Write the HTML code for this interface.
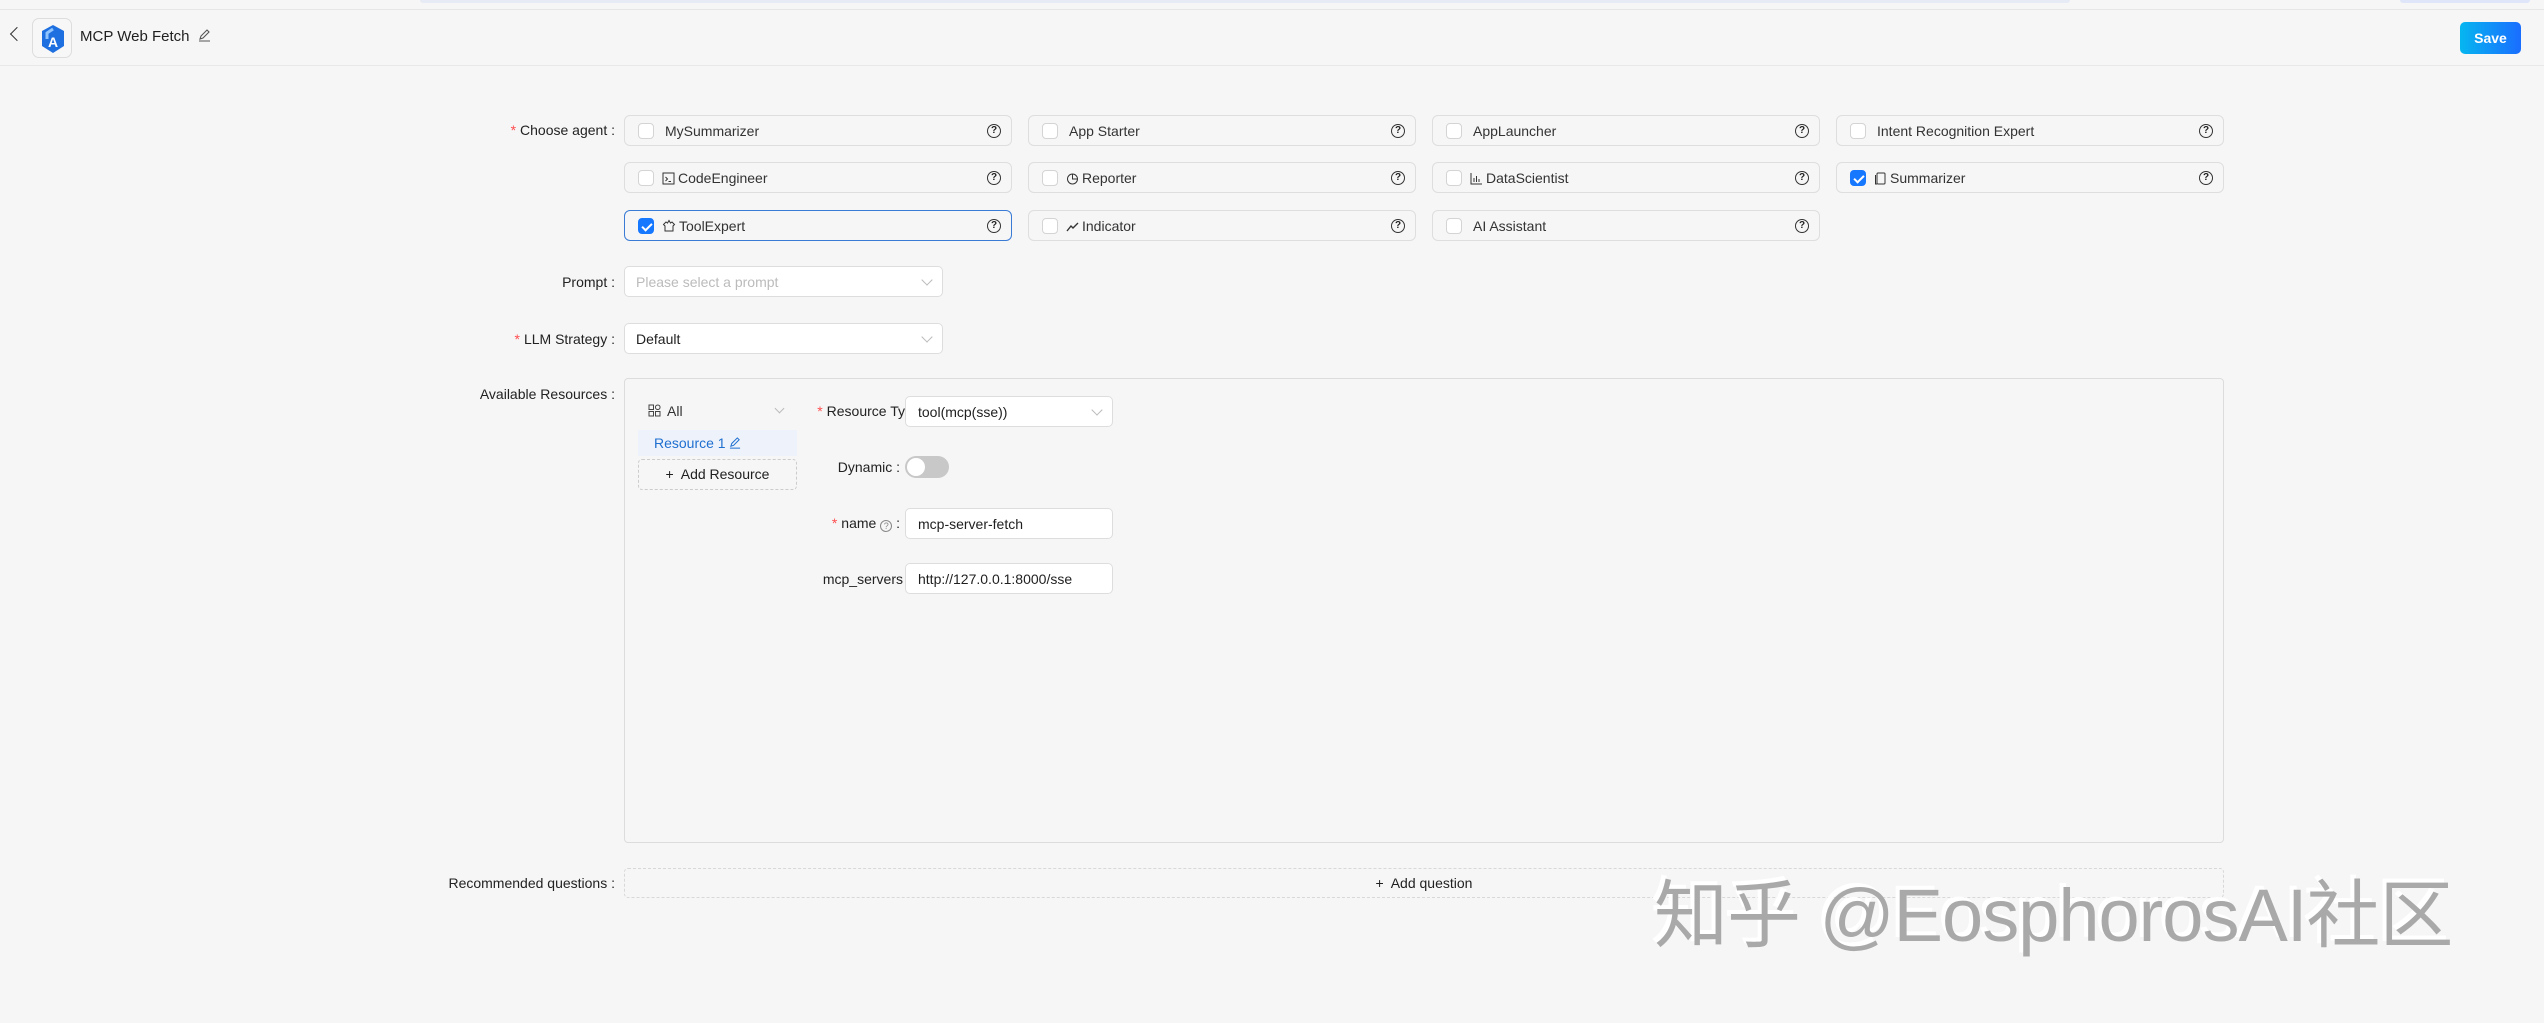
<!DOCTYPE html>
<html><head><meta charset="utf-8"><style>
*{box-sizing:border-box;margin:0;padding:0}
body{width:2544px;height:1023px;background:#f6f6f6;font-family:"Liberation Sans","Noto Sans CJK SC",sans-serif;color:#1f1f1f;position:relative;overflow:hidden;font-size:14px}
.a{position:absolute}
.topstrip{left:420px;top:0;width:1650px;height:3px;background:#e6ebf5;border-radius:0 0 6px 6px}
.topstrip2{left:2400px;top:0;width:130px;height:3px;background:#dfe6fa;border-radius:0 0 6px 6px}
.hdr{left:0;top:9px;width:2544px;height:57px;border-top:1px solid #e6e6e6;border-bottom:1px solid #e8e8e8}
.logo{left:32px;top:18px;width:40px;height:40px;border:1px solid #ddd;border-radius:7px;background:#f7f7f7}
.title{left:80px;top:28px;font-size:15px}
.save{left:2460px;top:22px;width:61px;height:32px;border-radius:5px;background:linear-gradient(90deg,#06b6f0,#1a6dff);color:#fff;font-weight:bold;font-size:14px;text-align:center;line-height:32px}
.lbl{text-align:right;font-size:14px;color:#222}
.req{color:#ff4d4f;margin-right:4px}
.cb{height:31px;width:388px;border:1px solid #dedede;border-radius:6px;background:#f6f6f6}
.cb.sel{border-color:#3a7bd5}
.box{position:absolute;left:13px;top:7px;width:16px;height:16px;border:1px solid #d4d4d4;border-radius:4px;background:#fff}
.box.on{background:#1677ff;border-color:#1677ff}
.box.on:after{content:"";position:absolute;left:5px;top:2px;width:4px;height:8px;border:solid #fff;border-width:0 2px 2px 0;transform:rotate(45deg)}
.t{position:absolute;left:40px;top:7px;font-size:14px;color:#333;white-space:nowrap}
.t.i{left:37px}
.t svg{vertical-align:-2px;margin-right:3px}
.q{position:absolute;right:10px;top:8px;width:14px;height:14px;border:1.3px solid #333;border-radius:50%;font-size:10px;line-height:12px;text-align:center;font-weight:bold}
.sel2{width:319px;height:31px;border:1px solid #ddd;border-radius:5px;background:#fff;padding:7px 11px;font-size:14px}
.chev{position:absolute;right:11px;top:9px;width:8px;height:8px;border:solid #bbb;border-width:0 1px 1px 0;transform:rotate(45deg)}
.inp{width:208px;height:31px;border:1px solid #ddd;border-radius:5px;background:#fff;padding:7px 12px;font-size:14px}
</style></head><body>
<div class="a topstrip"></div><div class="a topstrip2"></div>
<div class="a hdr"></div>
<div class="a" style="left:12px;top:29px;width:10px;height:10px;border:solid #333;border-width:0 0 1.5px 1.5px;transform:rotate(45deg)"></div>
<div class="a logo"><svg width="40" height="40" viewBox="0 0 40 40"><path d="M20 6 L31 12 L31 27 L20 34 L9 27 L9 12 Z" fill="#1e6fe0"/><path d="M20 10 L14 14 L14 20" stroke="#8fc4ff" stroke-width="3" fill="none"/><text x="20" y="28" font-size="14" font-weight="bold" fill="#fff" text-anchor="middle" font-family="Liberation Sans">A</text></svg></div>
<div class="a title">MCP Web Fetch <svg width="13" height="13" viewBox="0 0 13 13" style="vertical-align:-1px;margin-left:4px"><path d="M2 10 L3 7 L9 1 L11 3 L5 9 Z M1 12 H12" stroke="#555" fill="none" stroke-width="1.1"/></svg></div>
<div class="a save">Save</div>

<div class="a lbl" style="left:400px;width:215px;top:122px"><span class="req">*</span>Choose agent :</div>

<div class="a cb" style="left:624px;top:115px"><div class="box"></div><div class="t">MySummarizer</div><div class="q">?</div></div>
<div class="a cb" style="left:1028px;top:115px"><div class="box"></div><div class="t">App Starter</div><div class="q">?</div></div>
<div class="a cb" style="left:1432px;top:115px"><div class="box"></div><div class="t">AppLauncher</div><div class="q">?</div></div>
<div class="a cb" style="left:1836px;top:115px"><div class="box"></div><div class="t">Intent Recognition Expert</div><div class="q">?</div></div>

<div class="a cb" style="left:624px;top:162px"><div class="box"></div><div class="t i"><svg width="13" height="13" viewBox="0 0 13 13"><rect x="1" y="1" width="11" height="11" fill="none" stroke="#333"/><path d="M3.5 5 L5.5 7 L3.5 9 M6.5 9.5 H9" stroke="#333" fill="none"/></svg>CodeEngineer</div><div class="q">?</div></div>
<div class="a cb" style="left:1028px;top:162px"><div class="box"></div><div class="t i"><svg width="13" height="13" viewBox="0 0 13 13"><circle cx="6.5" cy="7" r="5" fill="none" stroke="#333"/><path d="M6.5 2 V7 H11.5" stroke="#333" fill="none"/></svg>Reporter</div><div class="q">?</div></div>
<div class="a cb" style="left:1432px;top:162px"><div class="box"></div><div class="t i"><svg width="13" height="13" viewBox="0 0 13 13"><path d="M1 1 V12 H12 M4 10 V6 M6.5 10 V4 M9 10 V7" stroke="#333" fill="none"/></svg>DataScientist</div><div class="q">?</div></div>
<div class="a cb" style="left:1836px;top:162px"><div class="box on"></div><div class="t i"><svg width="13" height="13" viewBox="0 0 13 13"><rect x="3" y="1" width="8" height="11" rx="1" fill="none" stroke="#333"/><path d="M1.5 3 V12 H3" stroke="#333" fill="none"/></svg>Summarizer</div><div class="q">?</div></div>

<div class="a cb sel" style="left:624px;top:210px"><div class="box on"></div><div class="t i"><svg width="14" height="14" viewBox="0 0 14 14"><path d="M3 12 V7 L1.5 5.5 L4 3 L5.5 4 L7 1.5 L8.5 4 L10 3 L12.5 5.5 L11 7 V12 Z" fill="none" stroke="#333"/></svg>ToolExpert</div><div class="q">?</div></div>
<div class="a cb" style="left:1028px;top:210px"><div class="box"></div><div class="t i"><svg width="13" height="13" viewBox="0 0 13 13"><path d="M1 11 L5 6 L7 8 L12 3" stroke="#333" stroke-width="1.4" fill="none"/></svg>Indicator</div><div class="q">?</div></div>
<div class="a cb" style="left:1432px;top:210px"><div class="box"></div><div class="t">AI Assistant</div><div class="q">?</div></div>

<div class="a lbl" style="left:400px;width:215px;top:274px">Prompt :</div>
<div class="a sel2" style="left:624px;top:266px;color:#bbb">Please select a prompt<div class="chev"></div></div>
<div class="a lbl" style="left:400px;width:215px;top:331px"><span class="req">*</span>LLM Strategy :</div>
<div class="a sel2" style="left:624px;top:323px">Default<div class="chev"></div></div>

<div class="a lbl" style="left:400px;width:215px;top:386px">Available Resources :</div>
<div class="a" style="left:624px;top:378px;width:1600px;height:465px;border:1px solid #dcdcdc;border-radius:4px"></div>
<div class="a" style="left:648px;top:403px;font-size:14px;color:#333"><svg width="13" height="13" viewBox="0 0 13 13" style="vertical-align:-1px;margin-right:6px"><rect x="1" y="1" width="4.5" height="4.5" fill="none" stroke="#444"/><rect x="1" y="7.5" width="4.5" height="4.5" fill="none" stroke="#444"/><rect x="7.5" y="7.5" width="4.5" height="4.5" fill="none" stroke="#444"/><circle cx="9.75" cy="3.25" r="2.3" fill="none" stroke="#444"/></svg>All</div>
<div class="a" style="left:776px;top:405px;width:7px;height:7px;border:solid #bbb;border-width:0 1px 1px 0;transform:rotate(45deg)"></div>
<div class="a" style="left:638px;top:430px;width:159px;height:26px;background:#eef3fb;color:#1f6fd0;padding:5px 16px;font-size:14px">Resource 1 <svg width="12" height="12" viewBox="0 0 13 13" style="vertical-align:-1px"><path d="M2 10 L3 7 L9 1 L11 3 L5 9 Z M1 12 H12" stroke="#1f6fd0" fill="none" stroke-width="1.1"/></svg></div>
<div class="a" style="left:638px;top:459px;width:159px;height:31px;border:1px dashed #ccc;border-radius:4px;text-align:center;line-height:29px;font-size:14px">+&nbsp; Add Resource</div>

<div class="a lbl" style="left:780px;width:125px;top:403px;overflow:hidden;white-space:nowrap"><span class="req">*</span>Resource Ty</div>
<div class="a inp" style="left:905px;top:396px">tool(mcp(sse))<div class="chev"></div></div>
<div class="a lbl" style="left:780px;width:120px;top:459px">Dynamic :</div>
<div class="a" style="left:905px;top:456px;width:44px;height:22px;border-radius:11px;background:#c8c8c8"><div style="position:absolute;left:2px;top:2px;width:18px;height:18px;border-radius:50%;background:#fff"></div></div>
<div class="a lbl" style="left:780px;width:120px;top:515px"><span class="req">*</span>name <span style="display:inline-block;width:12px;height:12px;border:1px solid #888;border-radius:50%;font-size:9px;line-height:10px;text-align:center;color:#888;vertical-align:-1px">?</span> :</div>
<div class="a inp" style="left:905px;top:508px">mcp-server-fetch</div>
<div class="a lbl" style="left:780px;width:123px;top:571px">mcp_servers</div>
<div class="a inp" style="left:905px;top:563px">http://127.0.0.1:8000/sse</div>

<div class="a lbl" style="left:380px;width:235px;top:875px">Recommended questions :</div>
<div class="a" style="left:624px;top:868px;width:1600px;height:30px;border:1px dashed #d8d8d8;border-radius:4px;text-align:center;line-height:28px;font-size:14px">+&nbsp; Add question</div>

<div class="a" style="left:1654px;top:856px;font-size:74px;color:#a9a9a9;text-shadow:-4px -4px 0 #fff;letter-spacing:-1px;font-family:'Liberation Sans','Noto Sans CJK SC',sans-serif;white-space:nowrap">知乎 @EosphorosAI社区</div>
</body></html>
